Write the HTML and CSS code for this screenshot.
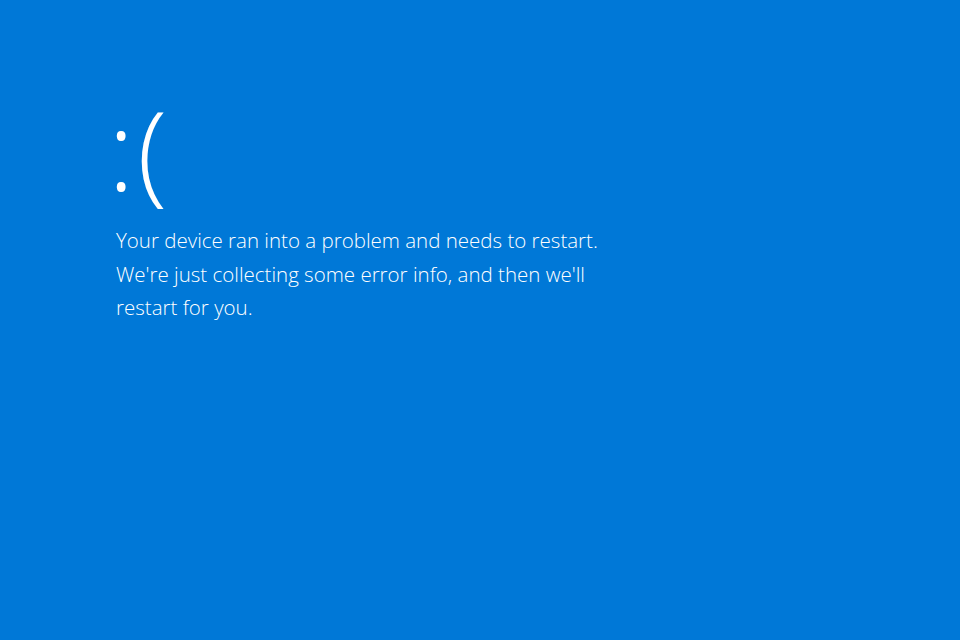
FILE: index.html
```html
<!DOCTYPE html>
<html>
<head>
<meta charset="utf-8">
<link rel="stylesheet" href="styles.css">
</head>
<body>
<main class="screen">
  <div class="face">:(</div>
  <p class="message">Your device ran into a problem and needs to restart.<br>We're just collecting some error info, and then we'll<br>restart for you.</p>
</main>
</body>
</html>
```
FILE: styles.css
```css
html, body {
  margin: 0;
  padding: 0;
  width: 960px;
  height: 640px;
  background: #0078d7;
  overflow: hidden;
}
.screen {
  padding: 86px 0 0 108px;
  color: #ffffff;
  font-family: "Open Sans", "Noto Sans", sans-serif;
  font-weight: 300;
}
.face {
  font-size: 110px;
  line-height: 124px;
  height: 124px;
  letter-spacing: 3px;
}
.message {
  margin: 14px 0 0 8px;
  font-size: 20.5px;
  line-height: 33.5px;
}
```
